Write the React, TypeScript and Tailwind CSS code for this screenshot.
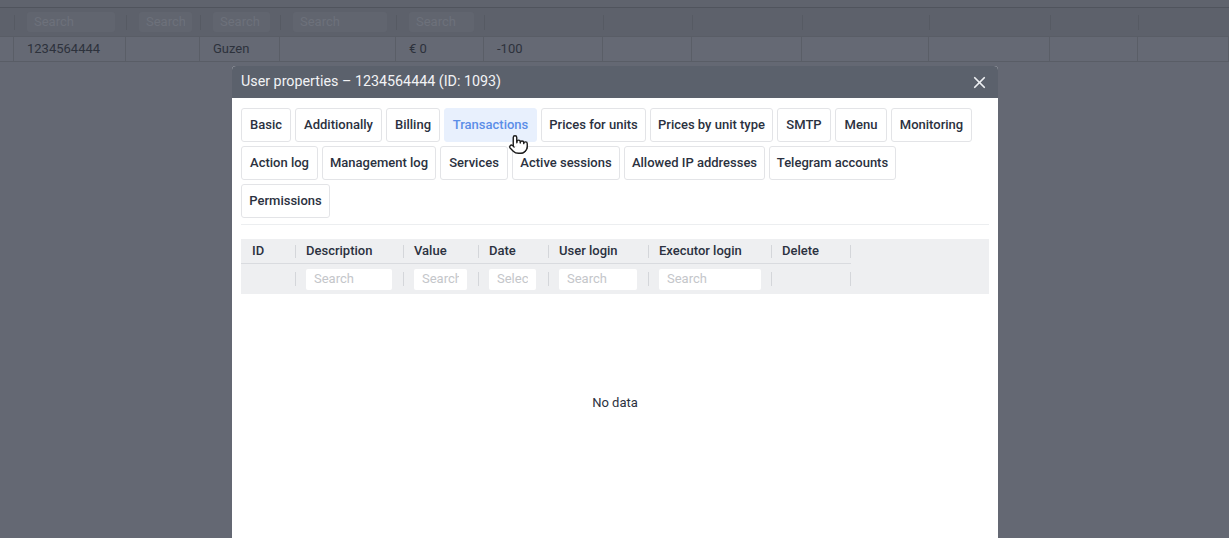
import { Pointer, X } from "lucide-react";

const bgCols = [
  { w: "w-[14px]", input: "", text: "" },
  { w: "w-[112px]", input: "w-[88px]", text: "1234564444" },
  { w: "w-[74px]", input: "w-[53px]", text: "" },
  { w: "w-[80px]", input: "w-[57px]", text: "Guzen" },
  { w: "w-[116px]", input: "w-[94px]", text: "" },
  { w: "w-[88px]", input: "w-[65px]", text: "€ 0" },
  { w: "w-[119px]", input: "", text: "-100" },
  { w: "w-[89px]", input: "", text: "" },
  { w: "w-[110px]", input: "", text: "" },
  { w: "w-[127px]", input: "", text: "" },
  { w: "w-[121px]", input: "", text: "" },
  { w: "w-[88px]", input: "", text: "" },
  { w: "flex-1", input: "", text: "" },
];

const tabRows = [
  [
    { label: "Basic", w: "w-[50px]" },
    { label: "Additionally", w: "w-[87px]" },
    { label: "Billing", w: "w-[54px]" },
    { label: "Transactions", w: "w-[93px]", active: true },
    { label: "Prices for units", w: "w-[105px]" },
    { label: "Prices by unit type", w: "w-[123px]" },
    { label: "SMTP", w: "w-[54px]" },
    { label: "Menu", w: "w-[52px]" },
    { label: "Monitoring", w: "w-[81px]" },
  ],
  [
    { label: "Action log", w: "w-[77px]" },
    { label: "Management log", w: "w-[114px]" },
    { label: "Services", w: "w-[68px]" },
    { label: "Active sessions", w: "w-[108px]" },
    { label: "Allowed IP addresses", w: "w-[141px]" },
    { label: "Telegram accounts", w: "w-[127px]" },
  ],
  [{ label: "Permissions", w: "w-[89px]" }],
];

const columns = [
  { label: "ID", w: "w-[54px]", filter: "" },
  { label: "Description", w: "w-[108px]", filter: "w-[86px]", ph: "Search" },
  { label: "Value", w: "w-[75px]", filter: "w-[53px]", ph: "Search" },
  { label: "Date", w: "w-[70px]", filter: "w-[47px]", ph: "Select" },
  { label: "User login", w: "w-[100px]", filter: "w-[78px]", ph: "Search" },
  { label: "Executor login", w: "w-[123px]", filter: "w-[102px]", ph: "Search" },
  { label: "Delete", w: "w-[80px]", filter: "" },
];

export default function App() {
  return (
    <div className="relative h-[538px] w-full overflow-hidden bg-[#646873] font-['Roboto',sans-serif]">
      {/* --- background table (dimmed) --- */}
      <div className="h-[8px] border-b border-[#50545d] bg-[#5f636d]" />
      <div className="flex h-[28px] bg-[#5d616b]">
        {bgCols.map((c, i) => (
          <div key={i} className={`${c.w} relative flex items-center pl-[13px]`}>
            {i > 0 && <span className="absolute left-0 top-[7px] h-[15px] w-px bg-[#565a63]" />}
            {c.input && (
              <div className={`${c.input} flex h-[20px] items-center rounded-[3px] bg-[#61656f] px-[7px] text-[13px] text-[#6d717b]`}>
                <span className="block overflow-hidden whitespace-nowrap">Search</span>
              </div>
            )}
          </div>
        ))}
      </div>
      <div className="flex h-[26px] border-y border-[#595d66] bg-[#656974]">
        {bgCols.map((c, i) => (
          <div key={i} className={`${c.w} flex items-center border-r border-[#5a5e67] pl-[13px] text-[13px] text-[#2d323c]`}>
            {c.text}
          </div>
        ))}
      </div>

      {/* --- modal --- */}
      <div className="absolute left-[232px] top-[66px] bottom-0 w-[766px] overflow-hidden rounded-t-[4px] bg-white">
        <div className="flex h-[32px] items-center justify-between bg-[#5b616c] pl-[9px] pr-[9px]">
          <span className="text-[14.3px] text-[#f2f3f5]">User properties – 1234564444 (ID: 1093)</span>
          <X size={19} strokeWidth={2.2} className="text-[#eef0f2]" />
        </div>

        <div className="px-[9px] pt-[10px]">
          <div className="flex flex-col gap-[4px]">
            {tabRows.map((row, ri) => (
              <div key={ri} className="flex gap-[4px]">
                {row.map((t) => (
                  <button
                    key={t.label}
                    className={`${t.w} h-[34px] rounded-[3px] border text-center text-[13px] font-medium whitespace-nowrap ${
                      t.active
                        ? "border-[#e8f0fd] bg-[#e8f0fd] text-[#5b8ee8]"
                        : "border-[#e3e4e7] bg-white text-[#2b3140]"
                    }`}
                  >
                    {t.label}
                  </button>
                ))}
              </div>
            ))}
          </div>

          <div className="mt-[6px] h-px bg-[#eceef0]" />

          {/* table */}
          <div className="mt-[14px] bg-[#eeeff1]">
            <div className="flex">
              <div className="flex h-[25px] border-b border-[#d9dbdf]">
                {columns.map((c, i) => (
                  <div key={c.label} className={`${c.w} relative flex items-center pl-[11px] text-[13px] font-medium text-[#2b3140]`}>
                    {i > 0 && <span className="absolute left-0 top-[6px] h-[13px] w-px bg-[#d4d6da]" />}
                    {c.label}
                    {i === columns.length - 1 && <span className="absolute right-0 top-[6px] h-[13px] w-px bg-[#d4d6da]" />}
                  </div>
                ))}
              </div>
            </div>
            <div className="flex h-[30px]">
              {columns.map((c, i) => (
                <div key={c.label} className={`${c.w} relative flex items-center pl-[11px]`}>
                  {i > 0 && <span className="absolute left-0 top-[8px] h-[14px] w-px bg-[#d4d6da]" />}
                  {c.filter && (
                    <div className={`${c.filter} flex h-[21px] items-center rounded-[2px] bg-white px-[8px] text-[13px] text-[#c4c6ca]`}>
                      <span className="block overflow-hidden whitespace-nowrap">{c.ph}</span>
                    </div>
                  )}
                  {i === columns.length - 1 && <span className="absolute right-0 top-[8px] h-[14px] w-px bg-[#d4d6da]" />}
                </div>
              ))}
            </div>
          </div>

          <div className="pt-[99px] text-center text-[13px] text-[#2b3140]">No data</div>
        </div>
      </div>

      {/* cursor */}
      <Pointer
        size={21}
        strokeWidth={1.6}
        className="absolute left-[508px] top-[134px] fill-white text-[#1c1c1c]"
      />
    </div>
  );
}
